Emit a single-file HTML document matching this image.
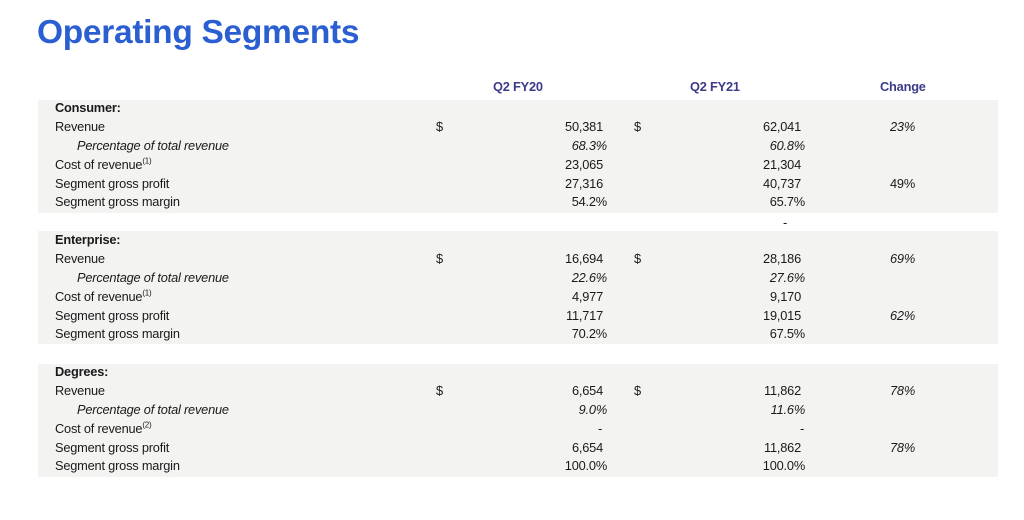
<!DOCTYPE html>
<html><head><meta charset="utf-8"><style>
*{margin:0;padding:0}
body{width:1024px;height:520px;background:#fff;position:relative;overflow:hidden;font-family:"Liberation Sans",sans-serif;color:#1a1a1a}
.t{position:absolute;left:37px;top:14px;font-size:33.5px;font-weight:bold;color:#2b5fd1;letter-spacing:-0.3px}
.box{position:absolute;left:38px;width:960px;height:113px;background:#f3f3f2}
.x{position:absolute;font-size:12.8px;line-height:16px;white-space:nowrap;letter-spacing:-0.2px}
.h{font-weight:bold;color:#3b3b8a}
.b{font-weight:bold}
.i{font-style:italic}
sup{font-size:8px;line-height:0}
</style></head><body>
<div class="t">Operating Segments</div>
<div class="x h" style="left:493px;top:79px">Q2 FY20</div>
<div class="x h" style="left:690px;top:79px">Q2 FY21</div>
<div class="x h" style="left:880px;top:79px">Change</div>
<div class="box" style="top:100px"></div>
<div class="box" style="top:231px"></div>
<div class="box" style="top:364px"></div>
<div class="x" style="left:783px;top:215px">-</div>
<!-- Consumer -->
<div class="x b" style="left:55px;top:100px">Consumer:</div>
<div class="x" style="left:55px;top:119px">Revenue</div>
<div class="x i" style="left:77px;top:138px">Percentage of total revenue</div>
<div class="x" style="left:55px;top:157px">Cost of revenue<sup>(1)</sup></div>
<div class="x" style="left:55px;top:176px">Segment gross profit</div>
<div class="x" style="left:55px;top:194px">Segment gross margin</div>
<div class="x" style="left:436px;top:119px">$</div><div class="x" style="left:634px;top:119px">$</div>
<div class="x" style="right:421px;top:119px">50,381</div><div class="x" style="right:223px;top:119px">62,041</div><div class="x i" style="right:109px;top:119px">23%</div>
<div class="x i" style="right:417px;top:138px">68.3%</div><div class="x i" style="right:219px;top:138px">60.8%</div>
<div class="x" style="right:421px;top:157px">23,065</div><div class="x" style="right:223px;top:157px">21,304</div>
<div class="x" style="right:421px;top:176px">27,316</div><div class="x" style="right:223px;top:176px">40,737</div><div class="x" style="right:109px;top:176px">49%</div>
<div class="x" style="right:417px;top:194px">54.2%</div><div class="x" style="right:219px;top:194px">65.7%</div>
<!-- Enterprise -->
<div class="x b" style="left:55px;top:232px">Enterprise:</div>
<div class="x" style="left:55px;top:251px">Revenue</div>
<div class="x i" style="left:77px;top:270px">Percentage of total revenue</div>
<div class="x" style="left:55px;top:289px">Cost of revenue<sup>(1)</sup></div>
<div class="x" style="left:55px;top:308px">Segment gross profit</div>
<div class="x" style="left:55px;top:326px">Segment gross margin</div>
<div class="x" style="left:436px;top:251px">$</div><div class="x" style="left:634px;top:251px">$</div>
<div class="x" style="right:421px;top:251px">16,694</div><div class="x" style="right:223px;top:251px">28,186</div><div class="x i" style="right:109px;top:251px">69%</div>
<div class="x i" style="right:417px;top:270px">22.6%</div><div class="x i" style="right:219px;top:270px">27.6%</div>
<div class="x" style="right:421px;top:289px">4,977</div><div class="x" style="right:223px;top:289px">9,170</div>
<div class="x" style="right:421px;top:308px">11,717</div><div class="x" style="right:223px;top:308px">19,015</div><div class="x i" style="right:109px;top:308px">62%</div>
<div class="x" style="right:417px;top:326px">70.2%</div><div class="x" style="right:219px;top:326px">67.5%</div>
<!-- Degrees -->
<div class="x b" style="left:55px;top:364px">Degrees:</div>
<div class="x" style="left:55px;top:383px">Revenue</div>
<div class="x i" style="left:77px;top:402px">Percentage of total revenue</div>
<div class="x" style="left:55px;top:421px">Cost of revenue<sup>(2)</sup></div>
<div class="x" style="left:55px;top:440px">Segment gross profit</div>
<div class="x" style="left:55px;top:458px">Segment gross margin</div>
<div class="x" style="left:436px;top:383px">$</div><div class="x" style="left:634px;top:383px">$</div>
<div class="x" style="right:421px;top:383px">6,654</div><div class="x" style="right:223px;top:383px">11,862</div><div class="x i" style="right:109px;top:383px">78%</div>
<div class="x i" style="right:417px;top:402px">9.0%</div><div class="x i" style="right:219px;top:402px">11.6%</div>
<div class="x" style="right:422px;top:421px">-</div><div class="x" style="right:220px;top:421px">-</div>
<div class="x" style="right:421px;top:440px">6,654</div><div class="x" style="right:223px;top:440px">11,862</div><div class="x i" style="right:109px;top:440px">78%</div>
<div class="x" style="right:417px;top:458px">100.0%</div><div class="x" style="right:219px;top:458px">100.0%</div>
</body></html>
